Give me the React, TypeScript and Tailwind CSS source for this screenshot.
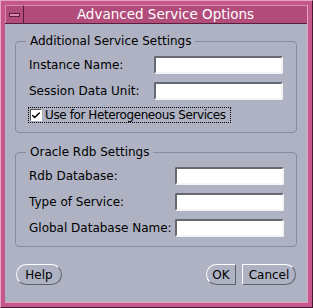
import { Check } from "lucide-react";

const font = { fontFamily: '"DejaVu Sans", "Liberation Sans", sans-serif' };

function Field({ w }: { w: string }) {
  return (
    <div className={`${w} h-[18px] shrink-0 bg-white rounded-[2px] border-2 border-t-[#666a70] border-l-[#666a70] border-b-[#f4f4f6] border-r-[#f4f4f6]`} />
  );
}

function Row({ label, w }: { label: string; w: string }) {
  return (
    <div className="flex items-center justify-between h-[18px]">
      <span className="text-[12px] text-black leading-none whitespace-nowrap">{label}</span>
      <Field w={w} />
    </div>
  );
}

export default function App() {
  return (
    <div className="w-[313px] h-[308px] bg-[#c4588a] border border-t-[#e6a3c2] border-l-[#e6a3c2] border-b-[#4a1730] border-r-[#4a1730] p-[4px]" style={font}>
      <div className="flex flex-col h-full border-r border-b border-[#e6a3c2]">
        {/* title bar */}
        <div className="flex h-[19px] bg-[#b24d7b] border-b border-[#5a1f3d]">
          <div className="w-[19px] flex items-center justify-center border-r border-[#5a1f3d] border-t border-l border-t-[#d98cb0] border-l-[#d98cb0]">
            <div className="w-[11px] h-[4px] bg-[#d98cb0] border border-[#5a1f3d]" />
          </div>
          <div className="flex-1 flex items-center justify-center text-white text-[13.5px] leading-none border-t border-[#d98cb0] whitespace-nowrap">
            Advanced Service Options
          </div>
        </div>

        {/* body */}
        <div className="flex-1 bg-[#aeb2c3] px-[10px] pt-[9px] flex flex-col">
          <fieldset className="border border-[#878b9c] rounded-[4px] px-[13px] pb-[9px]">
            <legend className="-ml-[3px] px-[4px] text-[12px] leading-[16px] text-black whitespace-nowrap">Additional Service Settings</legend>
            <div className="flex flex-col gap-[8px] pt-[7px]">
              <Row label="Instance Name:" w="w-[129px]" />
              <Row label="Session Data Unit:" w="w-[129px]" />
            </div>
            <div className="mt-[7px] -ml-[1px] w-[203px] h-[16px] border border-dotted border-black flex items-center gap-[3px] pl-[1px]">
              <div className="w-[12px] h-[12px] bg-white border border-t-[#555] border-l-[#555] border-b-white border-r-white flex items-center justify-center">
                <Check size={11} strokeWidth={3.5} className="text-black" />
              </div>
              <span className="text-[12px] leading-none text-black whitespace-nowrap tracking-[-0.4px]">Use for Heterogeneous Services</span>
            </div>
          </fieldset>

          <fieldset className="mt-[11px] border border-[#878b9c] rounded-[4px] pl-[13px] pr-[12px] pb-[9px]">
            <legend className="-ml-[3px] px-[4px] text-[12px] leading-[16px] text-black whitespace-nowrap">Oracle Rdb Settings</legend>
            <div className="flex flex-col gap-[8px] pt-[7px]">
              <Row label="Rdb Database:" w="w-[109px]" />
              <Row label="Type of Service:" w="w-[109px]" />
              <Row label="Global Database Name:" w="w-[109px]" />
            </div>
          </fieldset>

          <div className="flex-1 flex items-center justify-between pr-[1px] pl-[1px]">
            <button className="w-[46px] h-[21px] rounded-full bg-[#aeb2c3] border border-t-white border-l-white border-b-[#5e6170] border-r-[#5e6170] text-[12px] leading-none text-black">
              Help
            </button>
            <div className="flex gap-[6px]">
              <button className="w-[30px] h-[21px] rounded-l-full bg-[#aeb2c3] border border-t-white border-l-white border-b-[#5e6170] border-r-[#5e6170] text-[12px] leading-none text-black">
                OK
              </button>
              <button className="w-[54px] h-[21px] rounded-r-full bg-[#aeb2c3] border border-t-white border-l-white border-b-[#5e6170] border-r-[#5e6170] text-[12px] leading-none text-black">
                Cancel
              </button>
            </div>
          </div>
        </div>
      </div>
    </div>
  );
}
